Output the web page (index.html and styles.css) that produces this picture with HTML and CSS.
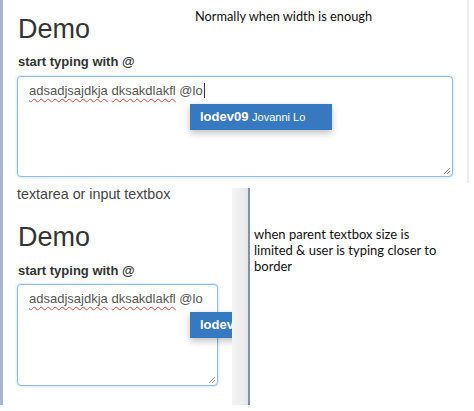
FILE: index.html
```html
<!DOCTYPE html>
<html>
<head>
<meta charset="utf-8">
<link rel="stylesheet" href="styles.css">
</head>
<body>
<div class="page">
  <section class="top">
    <div class="header">
      <h1 class="demo">Demo</h1>
      <p class="note">Normally when width is enough</p>
    </div>
    <label class="field-label">start typing with @</label>
    <div class="editor editor-wide">
      <div class="editor-text"><span class="typo">adsadjsajdkja</span> <span class="typo">dksakdlakfl</span> @lo<span class="caret"></span></div>
      <div class="mention"><b>lodev09</b> <span class="mention-name">Jovanni Lo</span></div>
      <svg class="grip" width="8" height="8" viewBox="0 0 8 8"><path d="M1 7L7 1M4 7L7 4" stroke="#8a8a8a" stroke-width="1"/></svg>
    </div>
  </section>
  <section class="bottom">
    <div class="col-left">
      <p class="caption">textarea or input textbox</p>
      <h1 class="demo demo-2">Demo</h1>
      <label class="field-label">start typing with @</label>
      <div class="editor editor-narrow">
        <div class="editor-text"><span class="typo">adsadjsajdkja</span> <span class="typo">dksakdlakfl</span> @lo</div>
        <div class="mention"><b>lodev09</b> <span class="mention-name">Jovanni Lo</span></div>
        <svg class="grip" width="8" height="8" viewBox="0 0 8 8"><path d="M1 7L7 1M4 7L7 4" stroke="#8a8a8a" stroke-width="1"/></svg>
      </div>
    </div>
    <div class="sep"></div>
    <div class="col-right">
      <p class="note note-block">when parent textbox size is limited &amp; user is typing closer to border</p>
    </div>
  </section>
</div>
</body>
</html>
```
FILE: styles.css
```css
html, body {
  margin: 0;
  padding: 0;
  background: #fff;
}
.page {
  border-left: 3px solid #a7b6cb;
  width: 471px;
  font-family: "Liberation Sans", Arial, sans-serif;
  color: #333;
}
.top {
  width: 450px;
  padding: 8px 0 6px 14px;
  border-right: 2px solid #ececec;
}
.header {
  display: grid;
  grid-template-columns: 178px 1fr;
  align-items: start;
}
.demo {
  margin: 6px 0 0 1px;
  font-size: 27px;
  line-height: 30px;
  font-weight: normal;
  color: #333;
}
.note {
  margin: 0;
  font-family: Lato, "Open Sans", sans-serif;
  font-size: 12.8px;
  line-height: 16px;
  color: #111;
}
.field-label {
  display: block;
  margin: 9px 0 5px 1px;
  font-size: 13px;
  line-height: 18px;
  font-weight: bold;
  color: #333;
}
.editor {
  position: relative;
  box-sizing: border-box;
  border: 1px solid #8fbbe4;
  border-radius: 4px;
  box-shadow: 0 0 3px rgba(102, 175, 233, 0.55);
  padding: 5px 11px;
  background: #fff;
}
.editor-wide {
  width: 436px;
  height: 101px;
}
.editor-narrow {
  width: 201px;
  height: 102px;
}
.editor-text {
  font-size: 13px;
  line-height: 18px;
  color: #555;
  white-space: nowrap;
}
.typo {
  text-decoration: underline wavy #e04848;
  text-decoration-thickness: 1px;
  text-underline-offset: 3px;
  text-decoration-skip-ink: none;
}
.caret {
  display: inline-block;
  width: 1px;
  height: 15px;
  margin-left: 1px;
  background: #333;
  vertical-align: -3px;
}
.mention {
  position: absolute;
  left: 172px;
  top: 27px;
  width: 132px;
  height: 26px;
  padding-left: 10px;
  background: #3679c1;
  color: #fff;
  font-size: 13px;
  line-height: 26px;
  white-space: nowrap;
  box-shadow: 0 3px 7px rgba(0, 0, 0, 0.25);
}
.mention-name {
  font-size: 11px;
}
.grip {
  position: absolute;
  right: 1px;
  bottom: 1px;
}
.bottom {
  display: flex;
  align-items: stretch;
}
.col-left {
  width: 215px;
  padding: 3px 0 19px 14px;
  overflow: hidden;
}
.caption {
  margin: 0;
  font-size: 14.3px;
  line-height: 17px;
  color: #444;
}
.demo-2 {
  margin-top: 19px;
}
.col-left .field-label {
  margin: 10px 0 4px 1px;
}
.sep {
  width: 16px;
  margin-top: 5px;
  background: linear-gradient(to right, #f3f3f3, #ececec 70%, #e4e4e4);
  border-right: 2px solid #7f92aa;
}
.col-right {
  flex: 1;
  padding: 43px 0 0 4px;
}
.note-block {
  width: 190px;
  font-size: 13px;
  line-height: 16px;
}
```
